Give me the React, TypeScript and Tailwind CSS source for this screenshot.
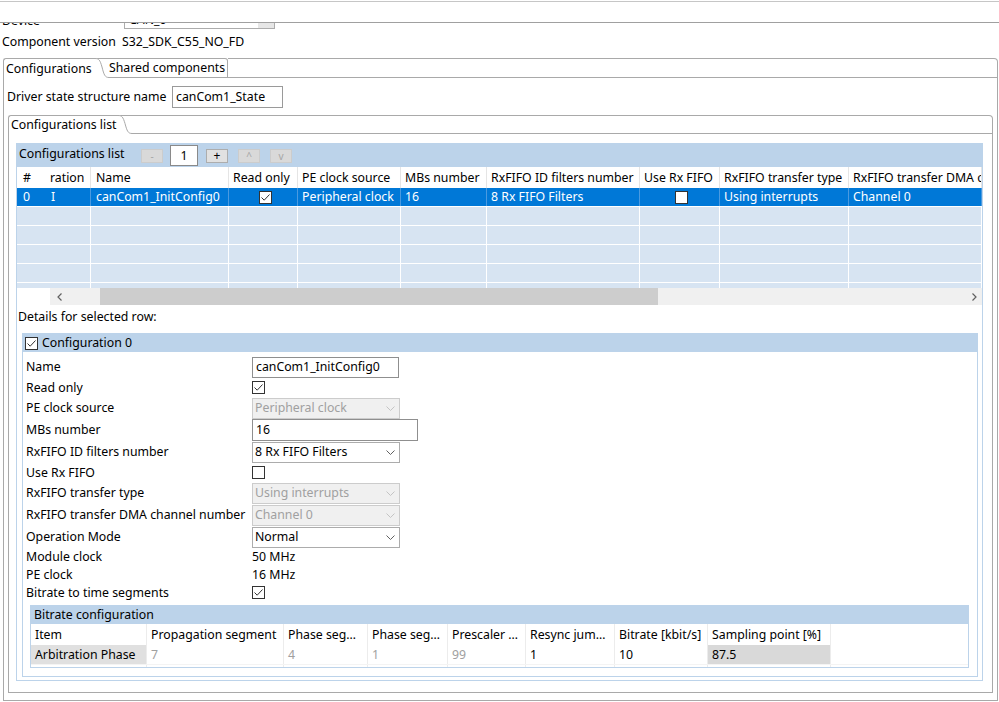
import React from "react";

type Col = { w: string; head: string; pl: string; sep: boolean };

const CFG_COLS: Col[] = [
  { w: "w-[33px]", head: "#", pl: "pl-[6px]", sep: false },
  { w: "w-[41px]", head: "ration", pl: "pl-0", sep: true },
  { w: "w-[138px]", head: "Name", pl: "pl-[5px]", sep: true },
  { w: "w-[69px]", head: "Read only", pl: "pl-[4px]", sep: true },
  { w: "w-[103px]", head: "PE clock source", pl: "pl-[4px]", sep: true },
  { w: "w-[86px]", head: "MBs number", pl: "pl-[4px]", sep: true },
  { w: "w-[153px]", head: "RxFIFO ID filters number", pl: "pl-[4px]", sep: true },
  { w: "w-[80px]", head: "Use Rx FIFO", pl: "pl-[4px]", sep: true },
  { w: "w-[129px]", head: "RxFIFO transfer type", pl: "pl-[4px]", sep: true },
  { w: "w-[133px]", head: "RxFIFO transfer DMA channel number", pl: "pl-[4px]", sep: true },
];

const BR_COLS = [
  { w: "w-[116px]", head: "Item", val: "Arbitration Phase", cls: "bg-[#e0e0e0] text-black" },
  { w: "w-[137px]", head: "Propagation segment", val: "7", cls: "text-[#a0a0a0]" },
  { w: "w-[84px]", head: "Phase seg…", val: "4", cls: "text-[#a0a0a0]" },
  { w: "w-[80px]", head: "Phase seg…", val: "1", cls: "text-[#a0a0a0]" },
  { w: "w-[78px]", head: "Prescaler …", val: "99", cls: "text-[#a0a0a0]" },
  { w: "w-[89px]", head: "Resync jum…", val: "1", cls: "text-black" },
  { w: "w-[93px]", head: "Bitrate [kbit/s]", val: "10", cls: "text-black" },
  { w: "w-[123px]", head: "Sampling point [%]", val: "87.5", cls: "bg-[#d9d9d9] text-black" },
];

function Check({ checked }: { checked?: boolean }) {
  return (
    <div className="w-[13px] h-[13px] flex-none border border-[#333333] bg-white flex items-center justify-center">
      {checked && (
        <svg width="11" height="11" viewBox="0 0 11 11">
          <path d="M1.5 5.5 L4.2 8.2 L9.5 2.5" fill="none" stroke="#333333" strokeWidth="1" />
        </svg>
      )}
    </div>
  );
}

function Chevron({ color }: { color: string }) {
  return (
    <svg width="9" height="5" viewBox="0 0 9 5">
      <path d="M0.5 0.5 L4.5 4.5 L8.5 0.5" fill="none" stroke={color} strokeWidth="1" />
    </svg>
  );
}

function Combo({ text, disabled }: { text: string; disabled?: boolean }) {
  return (
    <div
      className={
        disabled
          ? "w-[148px] h-[21px] border border-[#cccccc] bg-[#f0f0f0] flex items-center text-[#a0a0a0]"
          : "w-[148px] h-[21px] border border-[#acacac] bg-white flex items-center text-black"
      }
    >
      <span className="pl-[2px] flex-1 whitespace-nowrap">{text}</span>
      <span className="w-[18px] flex justify-center">
        <Chevron color={disabled ? "#c4c4c4" : "#606060"} />
      </span>
    </div>
  );
}

function SmallBtn({ label, disabled }: { label: string; disabled?: boolean }) {
  return (
    <div
      className={
        disabled
          ? "w-[22px] h-[14px] flex-none border border-[#cccccc] bg-[#d9d9d9] text-[#a6a6a6] flex items-center justify-center text-[10px] leading-[10px]"
          : "w-[22px] h-[14px] flex-none border border-[#adadad] bg-[#e1e1e1] text-black flex items-center justify-center text-[12px] leading-[12px]"
      }
    >
      {label}
    </div>
  );
}

function TabCurve({ h }: { h: number }) {
  const d = `M0 0.5 C4 0.5 5 2 7 ${h / 2 - 1} C9 ${h - 3} 10 ${h - 0.5} 14 ${h - 0.5}`;
  return (
    <svg width="14" height={h} viewBox={`0 0 14 ${h}`} className="flex-none">
      <path d="M0 0.5 H14" stroke="#a9a9a9" strokeWidth="1" fill="none" />
      <path d={`${d} L14 ${h}`} fill="#ffffff" stroke="none" />
      <path d={d} stroke="#a9a9a9" strokeWidth="1" fill="none" />
    </svg>
  );
}

function DRow({ label, h, children }: { label: string; h: string; children?: React.ReactNode }) {
  return (
    <div className={`flex items-center ${h}`}>
      <span className="pl-[3px] w-[229px] flex-none whitespace-nowrap">{label}</span>
      {children}
    </div>
  );
}

export default function App() {
  const selVals: React.ReactNode[] = [
    "0",
    <span className="pl-[1px]">I</span>,
    "canCom1_InitConfig0",
    <div className="w-full flex justify-center"><Check checked /></div>,
    "Peripheral clock",
    "16",
    "8 Rx FIFO Filters",
    <div className="w-full flex justify-center"><Check /></div>,
    "Using interrupts",
    "Channel 0",
  ];

  return (
    <div className="w-[999px] h-[702px] bg-white overflow-hidden font-['Noto_Sans',sans-serif] text-[12.3px] leading-[16px] text-black">
      {/* top header strip */}
      <div className="mt-[1px] h-[22px] border-t border-t-[#c6c6c6] border-b border-b-[#a0a0a0]" />

      {/* clipped Device row */}
      <div className="h-[6px] overflow-hidden">
        <div className="-mt-[16px] h-[22px] flex">
          <span className="pl-[2px] w-[124px] self-end">Device</span>
          <div className="w-[151px] h-[22px] border border-[#acacac] flex">
            <span className="pl-[4px] flex-1 self-end">CAN_0</span>
            <span className="w-[16px] h-full bg-[#e6e6e6]" />
          </div>
        </div>
      </div>

      {/* Component version */}
      <div className="h-[26px] flex items-center">
        <span className="pl-[2px] w-[122px]">Component version</span>
        <span>S32_SDK_C55_NO_FD</span>
      </div>

      {/* outer tabs */}
      <div className="mt-[3px] ml-[3px] w-[995px] h-[20px] flex">
        <div className="w-[92px] h-full border-l border-t border-[#a9a9a9] rounded-tl-[3px] flex items-center pl-[2px] whitespace-nowrap">
          Configurations
        </div>
        <TabCurve h={20} />
        <div className="w-[119px] h-full border-t border-b border-r border-[#a9a9a9] rounded-tr-[3px] flex items-center whitespace-nowrap">
          Shared components
        </div>
        <div className="flex-1 h-full border-t border-b border-r border-[#a9a9a9] rounded-tr-[4px]" />
      </div>

      {/* outer tab body */}
      <div className="ml-[3px] w-[995px] h-[623px] border-x border-b border-[#a9a9a9] pt-[8px]">
        <div className="h-[22px] flex items-center pl-[3px]">
          <span className="w-[165px] whitespace-nowrap">Driver state structure name</span>
          <div className="w-[111px] h-[22px] border border-[#9a9a9a] flex items-center pl-[3px]">canCom1_State</div>
        </div>

        {/* inner tabs */}
        <div className="mt-[7px] mx-[4px] h-[19px] flex">
          <div className="w-[110px] h-full border-l border-t border-[#a9a9a9] rounded-tl-[3px] flex items-center pl-[2px] whitespace-nowrap">
            Configurations list
          </div>
          <TabCurve h={19} />
          <div className="flex-1 h-full border-t border-b border-r border-[#a9a9a9] rounded-tr-[4px]" />
        </div>

        {/* inner tab body */}
        <div className="mx-[4px] h-[559px] border-x border-b border-[#a9a9a9] pt-[9px]">
          <div className="ml-[7px] w-[967px] h-[538px] border border-[#bcd3ea]">
            {/* configurations list header bar */}
            <div className="h-[23px] bg-[#bcd3ea] flex items-center">
              <span className="ml-[2px] w-[122px] mb-[4px] whitespace-nowrap">Configurations list</span>
              <SmallBtn label="-" disabled />
              <div className="ml-[7px] w-[28px] h-[21px] flex-none border border-[#8a8a8a] bg-white flex items-center justify-center">1</div>
              <div className="ml-[8px]"><SmallBtn label="+" /></div>
              <div className="ml-[10px]"><SmallBtn label="^" disabled /></div>
              <div className="ml-[10px]"><SmallBtn label="v" disabled /></div>
            </div>

            {/* table header */}
            <div className="h-[21px] flex bg-white">
              {CFG_COLS.map((c, i) => (
                <div
                  key={i}
                  className={`${c.w} flex-none h-full flex items-center overflow-hidden whitespace-nowrap ${c.pl} ${c.sep ? "border-r border-[#e5e5e5]" : ""}`}
                >
                  {c.head}
                </div>
              ))}
            </div>

            {/* selected row */}
            <div className="h-[19px] flex bg-[#0078d7] text-white border-b border-white">
              {CFG_COLS.map((c, i) => (
                <div
                  key={i}
                  className={`${c.w} flex-none h-full flex items-center overflow-hidden whitespace-nowrap ${c.pl} ${c.sep ? "border-r border-[#4a9ae0]" : ""}`}
                >
                  {selVals[i]}
                </div>
              ))}
            </div>

            {/* empty rows */}
            {[0, 1, 2, 3].map((r) => (
              <div key={r} className="h-[19px] flex bg-[#d7e4f2] border-b border-white">
                {CFG_COLS.map((c, i) => (
                  <div key={i} className={`${c.w} flex-none h-full ${c.sep ? "border-r border-white" : ""}`} />
                ))}
              </div>
            ))}
            <div className="h-[5px] flex bg-[#d7e4f2]">
              {CFG_COLS.map((c, i) => (
                <div key={i} className={`${c.w} flex-none h-full ${c.sep ? "border-r border-white" : ""}`} />
              ))}
            </div>

            {/* horizontal scrollbar */}
            <div className="h-[17px] flex">
              <div className="w-[33px] flex-none bg-white" />
              <div className="w-[50px] flex-none bg-[#f0f0f0] flex items-center pl-[7px]">
                <svg width="5" height="8" viewBox="0 0 5 8">
                  <path d="M4.5 0.5 L1 4 L4.5 7.5" fill="none" stroke="#606060" strokeWidth="1.2" />
                </svg>
              </div>
              <div className="w-[558px] flex-none bg-[#cdcdcd]" />
              <div className="flex-1 bg-[#f0f0f0] flex items-center justify-end pr-[5px]">
                <svg width="5" height="8" viewBox="0 0 5 8">
                  <path d="M0.5 0.5 L4 4 L0.5 7.5" fill="none" stroke="#606060" strokeWidth="1.2" />
                </svg>
              </div>
            </div>

            {/* details label */}
            <div className="h-[28px] pt-[4px] pl-[1px]">Details for selected row:</div>

            {/* configuration 0 group */}
            <div className="ml-[5px] w-[956px] h-[344px] border border-[#bcd3ea]">
              <div className="h-[18px] bg-[#bcd3ea] flex items-center pl-[2px]">
                <Check checked />
                <span className="ml-[4px]">Configuration 0</span>
              </div>
              <div className="pt-[4px]">
                <DRow label="Name" h="h-[22px]">
                  <div className="w-[147px] h-[21px] border border-[#8f8f8f] flex items-center pl-[3px] whitespace-nowrap">canCom1_InitConfig0</div>
                </DRow>
                <DRow label="Read only" h="h-[19px]"><Check checked /></DRow>
                <DRow label="PE clock source" h="h-[22px]"><Combo text="Peripheral clock" disabled /></DRow>
                <DRow label="MBs number" h="h-[22px]">
                  <div className="w-[166px] h-[22px] border border-[#8f8f8f] flex items-center pl-[3px]">16</div>
                </DRow>
                <DRow label="RxFIFO ID filters number" h="h-[22px]"><Combo text="8 Rx FIFO Filters" /></DRow>
                <DRow label="Use Rx FIFO" h="h-[19px]"><Check /></DRow>
                <DRow label="RxFIFO transfer type" h="h-[22px]"><Combo text="Using interrupts" disabled /></DRow>
                <DRow label="RxFIFO transfer DMA channel number" h="h-[22px]"><Combo text="Channel 0" disabled /></DRow>
                <DRow label="Operation Mode" h="h-[22px]"><Combo text="Normal" /></DRow>
                <DRow label="Module clock" h="h-[18px]"><span>50 MHz</span></DRow>
                <DRow label="PE clock" h="h-[17px]"><span>16 MHz</span></DRow>
                <DRow label="Bitrate to time segments" h="h-[19px]"><Check checked /></DRow>

                {/* bitrate configuration group */}
                <div className="mt-[3px] ml-[7px] w-[939px] h-[63px] border border-[#bcd3ea]">
                  <div className="h-[18px] bg-[#bcd3ea] flex items-center pl-[3px]">Bitrate configuration</div>
                  <div className="h-[21px] flex">
                    {BR_COLS.map((c, i) => (
                      <div key={i} className={`${c.w} flex-none h-full flex items-center pl-[4px] overflow-hidden whitespace-nowrap border-r border-[#ececec]`}>
                        {c.head}
                      </div>
                    ))}
                  </div>
                  <div className="h-[19px] flex">
                    {BR_COLS.map((c, i) => (
                      <div key={i} className={`${c.w} flex-none h-full flex items-center pl-[4px] overflow-hidden whitespace-nowrap border-r border-[#ececec] ${c.cls}`}>
                        {c.val}
                      </div>
                    ))}
                  </div>
                  <div className="h-[3px] flex border-t border-[#f4f4f4]">
                    {BR_COLS.map((c, i) => (
                      <div key={i} className={`${c.w} flex-none h-full border-r border-[#ececec]`} />
                    ))}
                  </div>
                </div>
              </div>
            </div>
          </div>
        </div>
      </div>
    </div>
  );
}
